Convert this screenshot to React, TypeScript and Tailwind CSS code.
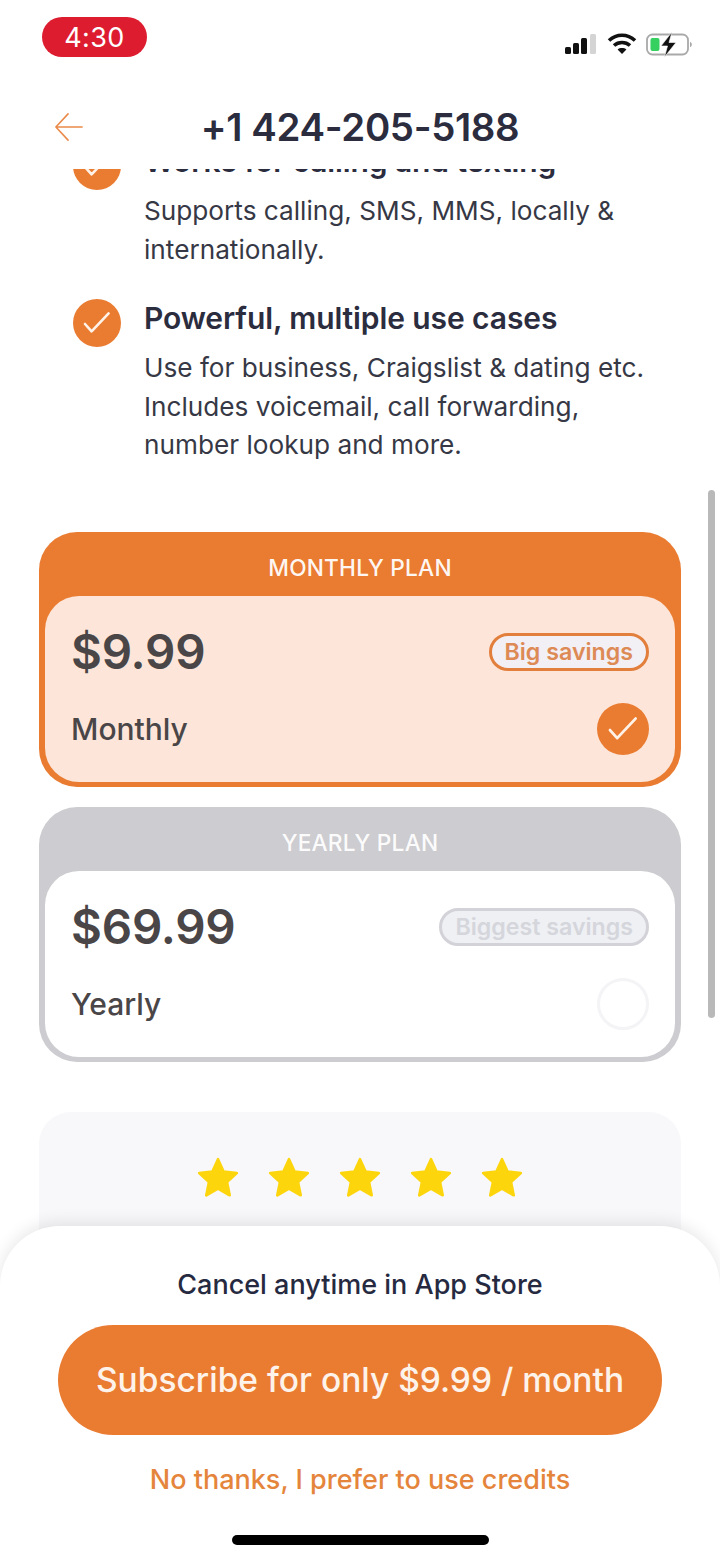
import React from "react";

const font = { fontFamily: "Inter, 'Liberation Sans', sans-serif" };

function Check({ size = 48, stroke = 2.6 }: { size?: number; stroke?: number }) {
  return (
    <svg width={size} height={size} viewBox="0 0 48 48" className="shrink-0 block">
      <circle cx="24" cy="24" r="24" fill="#ea7c32" />
      <path d="M12 25 L18.6 32.4 L35.6 14.4" fill="none" stroke="#fff2e8" strokeWidth={stroke} strokeLinecap="round" strokeLinejoin="round" />
    </svg>
  );
}

function Star() {
  return (
    <svg width="46" height="46" viewBox="0 0 24 24" className="block">
      <path
        d="M12 2.2 L14.9 8.6 L21.8 9.4 L16.7 14.1 L18.1 21 L12 17.5 L5.9 21 L7.3 14.1 L2.2 9.4 L9.1 8.6 Z"
        fill="#fdd50c"
        stroke="#fdd50c"
        strokeWidth="1.4"
        strokeLinejoin="round"
      />
    </svg>
  );
}

function Feature({ title, lines, gap }: { title: string; lines: string[]; gap: string }) {
  return (
    <div className={`flex gap-[23px] pl-[73px] pr-[50px] ${gap}`}>
      <Check />
      <div>
        <div className="text-[30px] leading-[38px] font-semibold text-[#2b2d3f] tracking-[-0.1px]">{title}</div>
        <div className="mt-[12px] text-[26.2px] leading-[38.5px] text-[#363845]">
          {lines.map((l) => (
            <div key={l}>{l}</div>
          ))}
        </div>
      </div>
    </div>
  );
}

function Plan(props: {
  head: string;
  price: string;
  label: string;
  badge: string;
  selected: boolean;
}) {
  const { selected } = props;
  return (
    <div className={`mx-[39px] h-[255px] rounded-[38px] flex flex-col px-[6px] pb-[5px] ${selected ? "bg-[#ea7c32]" : "bg-[#cdccd0]"}`}>
      <div className="h-[64px] shrink-0 pt-[8px] flex items-center justify-center text-[22.7px] font-medium text-white/95 tracking-[0.2px]">
        {props.head}
      </div>
      <div className={`flex-1 rounded-[34px] pl-[26px] pr-[26px] flex flex-col ${selected ? "bg-[#fde6d9]" : "bg-white"}`}>
        <div className="h-[107px] pt-[5px] flex items-center justify-between">
          <div className="text-[47.5px] font-semibold text-[#4a4648] tracking-[-0.2px]">{props.price}</div>
          {selected ? (
            <div className="h-[38px] px-[13px] rounded-full border-[3.5px] border-[#e27f3c] bg-[#f2eff5] flex items-center text-[23.2px] font-semibold text-[#dd8a55]">
              {props.badge}
            </div>
          ) : (
            <div className="h-[38px] px-[13px] rounded-full border-[3.5px] border-[#d2d2d8] bg-[#eff0f4] flex items-center text-[23.2px] font-semibold text-[#d5d6dc]">
              {props.badge}
            </div>
          )}
        </div>
        <div className="flex items-center justify-between">
          <div className="text-[30px] font-medium text-[#4a4648]">{props.label}</div>
          {selected ? (
            <Check size={52} stroke={2.6} />
          ) : (
            <div className="w-[52px] h-[52px] rounded-full border-[3px] border-[#f4f4f6]" />
          )}
        </div>
      </div>
    </div>
  );
}

export default function App() {
  return (
    <div className="relative w-[720px] h-[1560px] overflow-hidden bg-white flex flex-col" style={font}>
      <div className="h-[80px] shrink-0 flex items-start justify-between pl-[42px] pr-[27px] pt-[17px]">
        <div className="w-[105px] h-[40px] rounded-[20px] bg-[#dd1c30] flex items-center justify-center pt-[2px] text-white text-[27px] tracking-[0.4px]">
          4:30
        </div>
        <div className="flex items-center gap-[9px] mt-[14px]">
          <svg width="34" height="24" viewBox="0 0 34 24" className="block">
            <rect x="1" y="15" width="6" height="7" rx="1.5" fill="#111" />
            <rect x="9" y="11" width="6" height="11" rx="1.5" fill="#111" />
            <rect x="17" y="6" width="6" height="16" rx="1.5" fill="#111" />
            <rect x="26" y="2" width="6" height="20" rx="1.5" fill="#d4d4d4" />
          </svg>
          <svg width="30" height="24" viewBox="0 0 30 24" className="block">
            <path d="M2 8.5 C9.5 1.5 20.5 1.5 28 8.5" fill="none" stroke="#111" strokeWidth="3.6" />
            <path d="M7 13.5 C11.5 9.5 18.5 9.5 23 13.5" fill="none" stroke="#111" strokeWidth="3.6" />
            <path d="M15 22 L10.6 17.5 C13 15.6 17 15.6 19.4 17.5 Z" fill="#111" />
          </svg>
          <svg width="47" height="26" viewBox="0 0 47 26" className="block">
            <rect x="1" y="3.5" width="41" height="20" rx="5.5" fill="none" stroke="#a9a9a9" strokeWidth="1.8" />
            <rect x="4.5" y="7" width="9" height="13" rx="2" fill="#35d05f" />
            <path d="M44 11 C46.5 11.5 46.5 15.5 44 16 Z" fill="#a9a9a9" />
            <path d="M26 1 L15 15 L21.5 15 L18.5 26 L30 11.5 L23 11.5 Z" fill="#111" stroke="#fff" strokeWidth="0.6" />
          </svg>
        </div>
      </div>

      <div className="h-[89px] shrink-0 relative flex justify-center">
        <svg width="30" height="30" viewBox="0 0 32 32" className="absolute left-[54px] top-[32px]">
          <path d="M30 16 H2 M15 2 L2 16 L15 30" fill="none" stroke="#ea8a4a" strokeWidth="1.7" strokeLinecap="round" strokeLinejoin="round" />
        </svg>
        <div className="text-[38.4px] leading-[46px] font-semibold text-[#2b2d3f] tracking-[-0.35px] mt-[24px]">+1 424-205-5188</div>
      </div>

      <div className="flex-1 overflow-hidden">
        <div className="-mt-[27px]">
          <Feature
            title="Works for calling and texting"
            lines={["Supports calling, SMS, MMS, locally &", "internationally."]}
            gap=""
          />
          <Feature
            title="Powerful, multiple use cases"
            lines={["Use for business, Craigslist & dating etc.", "Includes voicemail, call forwarding,", "number lookup and more."]}
            gap="mt-[30px]"
          />
          <div className="mt-[67.5px]">
            <Plan head="MONTHLY PLAN" price="$9.99" label="Monthly" badge="Big savings" selected />
          </div>
          <div className="mt-[20px]">
            <Plan head="YEARLY PLAN" price="$69.99" label="Yearly" badge="Biggest savings" selected={false} />
          </div>
          <div className="mx-[39px] mt-[50px] h-[200px] rounded-[32px] bg-[#f8f8fa] pt-[43px] flex justify-center gap-[25px]">
            <Star />
            <Star />
            <Star />
            <Star />
            <Star />
          </div>
        </div>
      </div>

      <div className="absolute right-[5px] top-[490px] w-[7px] h-[528px] rounded-full bg-[#b9b9b9]" />

      <div className="absolute left-0 right-0 top-[1226px] h-[334px] rounded-t-[60px] bg-white shadow-[0_-4px_16px_rgba(0,0,0,0.09)] flex flex-col items-center">
        <div className="mt-[42px] text-[27px] leading-[34px] font-medium text-[#262a41]">Cancel anytime in App Store</div>
        <div className="mt-[23px] w-[604px] h-[110px] rounded-full bg-[#ea7c32] flex items-center justify-center text-[33.5px] font-medium text-[#fdf3ea]">
          Subscribe for only $9.99 / month
        </div>
        <div className="mt-[28px] text-[27px] leading-[34px] font-medium text-[#e5853c]">No thanks, I prefer to use credits</div>
        <div className="mt-[38px] w-[257px] h-[10px] rounded-full bg-black" />
      </div>
    </div>
  );
}
